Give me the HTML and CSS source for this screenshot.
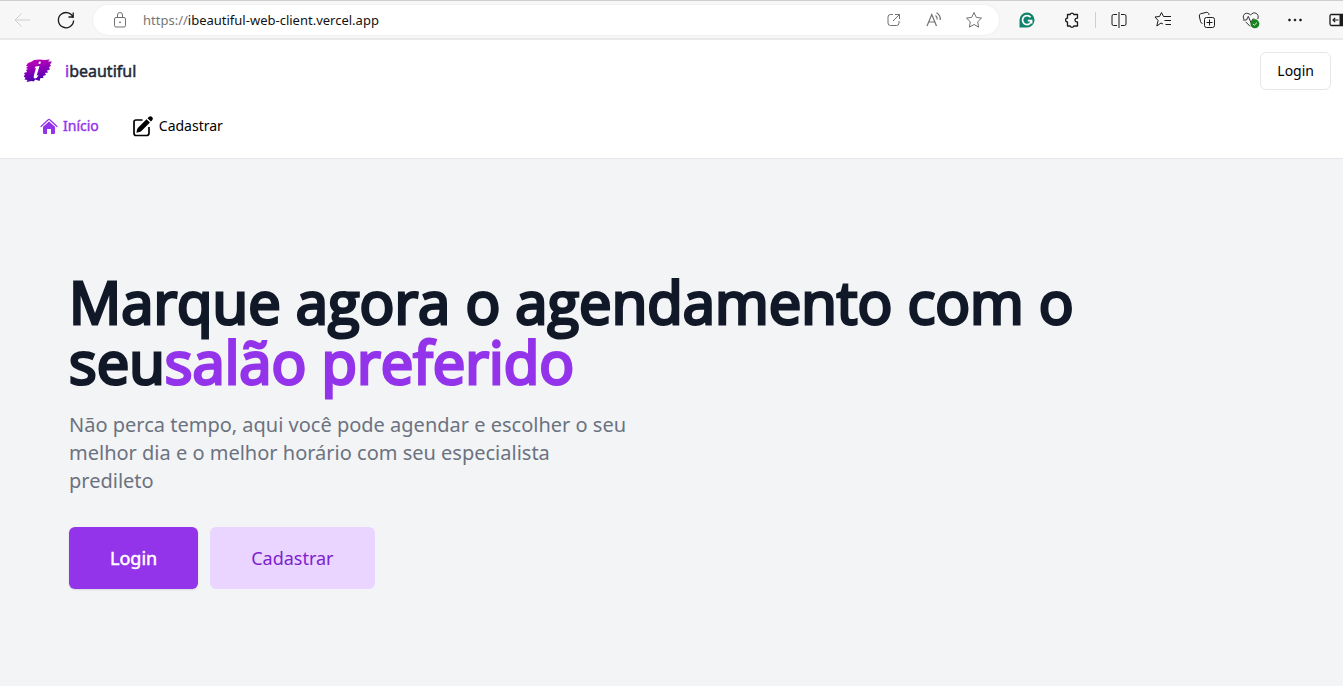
FILE: index.html
```html
<!DOCTYPE html>
<html lang="pt-BR">
<head>
<meta charset="utf-8">
<title>ibeautiful</title>
<link rel="stylesheet" href="styles.css">
</head>
<body>
<div class="browser">
  <button class="tool back" aria-label="Voltar"><svg width="18" height="18" viewBox="0 0 18 18"><path d="M17 9H2M8.500 2.500L2 9l6.500 6.500"/></svg></button>
  <button class="tool reload" aria-label="Atualizar"><svg width="18" height="18" viewBox="0 0 18 18"><path d="M16.300 7A7.600 7.600 0 1 0 16.600 9.500M16.200 1.500V6h-4.700" stroke-width="1.300"/></svg></button>
  <div class="address">
    <svg class="grey" width="16" height="18" viewBox="0 0 16 18"><rect x="2.500" y="6.500" width="11" height="9.500" rx="1.500"/><path d="M5.500 6.500V4a2.500 2.500 0 0 1 5 0v2.500"/><circle cx="8" cy="11.300" r=".5" fill="currentColor"/></svg>
    <div class="url"><span>https://</span>ibeautiful-web-client.vercel.app</div>
    <div class="address-tools grey">
      <button class="tool" aria-label="Abrir em janela"><svg width="16" height="16" viewBox="0 0 16 16"><path d="M8 2.500H5.500a2.500 2.500 0 0 0-2.500 2.500v6A2.500 2.500 0 0 0 5.500 13.500h6a2.500 2.500 0 0 0 2.500-2.500V9M10 2.500h4.500V7M14.200 2.800L8 9"/></svg></button>
      <button class="tool" aria-label="Ler em voz alta"><svg width="18" height="18" viewBox="0 0 18 18"><path d="M3 15L7.800 3.500 12.500 15M4.700 11h6.200M11.500 4.500q2 1.500 1.700 4M12.500 1.800q4.200 2.200 3.700 7.200" stroke-width="1.200"/></svg></button>
      <button class="tool" aria-label="Adicionar aos favoritos"><svg width="18" height="18" viewBox="0 0 18 18"><path d="M9 1.500l2.300 4.900 5.200.7-3.800 3.700.9 5.300L9 13.500l-4.600 2.600.9-5.300L1.500 7.100l5.200-.7z"/></svg></button>
    </div>
  </div>
  <div class="extensions">
    <button class="tool" aria-label="Grammarly"><svg width="16" height="16" viewBox="0 0 16 16"><path d="M.5 15.500V8a7.500 7.500 0 1 1 7.500 7.500z" fill="#11826b" stroke="none"/><path d="M11.600 5.300A4.500 4.500 0 1 0 12.500 8.700H8.800M12.600 8.500v3" stroke="#fff" stroke-width="1.700"/></svg></button>
    <button class="tool" aria-label="Extensões"><svg width="18" height="18" viewBox="0 0 18 18"><path d="M4.500 3.500h2.700a1.900 1.900 0 0 1 3.600 0H14.500V7.200q-2.500 0-2.500 1.900t2.500 1.900V15h-3.700a1.900 1.900 0 0 1-3.600 0H4.500v-4a1.900 1.900 0 0 1 0-3.800z" stroke-width="1.300" stroke-linejoin="round"/></svg></button>
  </div>
  <div class="window-tools">
    <button class="tool" aria-label="Tela dividida"><svg width="18" height="18" viewBox="0 0 18 18"><path d="M7 3.500H3.500a1.500 1.500 0 0 0-1.500 1.500v8a1.500 1.500 0 0 0 1.500 1.500H7M11 3.500h3.500A1.500 1.500 0 0 1 16 5v8a1.500 1.500 0 0 1-1.500 1.500H11M9 1v16"/></svg></button>
    <button class="tool" aria-label="Favoritos"><svg width="18" height="18" viewBox="0 0 18 18"><path d="M9 13L7 12l-4.200 3 1.300-5.500L1 6l4.500-.5L7.500 1.500l2 4H17M10.500 9.500H17M11.500 13.500H17"/></svg></button>
    <button class="tool" aria-label="Coleções"><svg width="18" height="18" viewBox="0 0 18 18"><rect x="6.500" y="6.500" width="10" height="10" rx="2"/><path d="M11.500 8.500v6M8.500 11.500h6M4.500 12.500q-1.500-.2-2-2L1.300 5q-.2-1.700 1.300-2.200l5.800-1.500q1.700-.2 2.300 1.300l.4 1.400"/></svg></button>
    <button class="tool" aria-label="Desempenho"><svg width="18" height="18" viewBox="0 0 20 20"><path d="M2 9C-.5 3 6 .5 9.500 4.500 13-.5 20 3 17.500 9M1 10h4l2-4 3 7 2-4h2M4 12l5 5"/><circle cx="14.300" cy="14.300" r="5" fill="#16831b" stroke="none"/><path d="M12 14.300l1.600 1.600 3-3" stroke="#fff"/></svg></button>
    <button class="tool" aria-label="Mais"><svg width="18" height="18" viewBox="0 0 18 18" class="solid"><circle cx="3.500" cy="9" r=".9"/><circle cx="9" cy="9" r=".9"/><circle cx="14.500" cy="9" r=".9"/></svg></button>
    <button class="tool" aria-label="Barra lateral"><svg width="18" height="18" viewBox="0 0 18 18"><path d="M16 3.500H1.500q-1.500 0-1.500 1.500v8q0 1.500 1.500 1.500H16z" stroke-width="1.300"/><path d="M10 4h6v10h-6z" fill="currentColor"/><path d="M8.500 9H3M5.200 6.800L3 9l2.200 2.200" stroke-width="1.200"/></svg></button>
  </div>
</div>

<header class="header">
  <div class="top">
    <a class="brand" href="#">
      <svg width="30" height="26" viewBox="0 0 30 26">
        <defs><linearGradient id="paint" x1="0" y1="0" x2=".3" y2="1"><stop offset="0" stop-color="#d000b4"/><stop offset=".5" stop-color="#9000b8"/><stop offset="1" stop-color="#4d00b0"/></linearGradient></defs>
        <path d="M4 5l4-1.500 2-1.500 6-.5 4 .5 6-.5-2 2 4 0-2 3 1 1-2 2 1 2-3 1 1 2-3 .5 1 2-3 1 .5 2-3 0-1 3-4-1.500-2 2-2-.5-5 1 1-2-3-.5 1-2-2.500-1 2-1.500-1-2 3-1-1-2 2-1-2-1 2-2-2 0z" fill="url(#paint)"/>
        <path d="M15 3.500l2 .3-.8 2.200-1.900-.2zM11.500 8.500l4-.5-2.800 9.500 1.800-.5q-1.500 3.500-3.500 3.500t-1-3.500l2-7-1.500.4z" fill="#fff"/>
      </svg>
      <span class="name"><span class="accent">i</span>beautiful</span>
    </a>
    <button class="login">Login</button>
  </div>
  <nav class="nav">
    <a class="link active" href="#"><svg width="18" height="18" viewBox="0 0 18 18"><path d="M9 4.500l6 5.200V16q0 1-1 1h-3v-5H7v5H4q-1 0-1-1V9.700z" fill="currentColor"/><path d="M1 9.500L8.200 2.700q.8-.8 1.600 0L17 9.500" fill="none" stroke="currentColor" stroke-width="1.200" stroke-linecap="round"/></svg>Início</a>
    <a class="link" href="#"><svg width="22" height="22" viewBox="0 0 22 22"><path d="M10.500 5H4Q2 5 2 7v11q0 2.500 2 2.500h10.500q2.500 0 2.500-2.500v-6" fill="none" stroke="currentColor" stroke-width="1.700"/><path d="M14.500 4.200l3.400 3.400-8.700 8.700q-1 .8-4.800 1.500.5-4 1.400-4.900zM15.500 3.200l1.300-1.300q1.600-1.500 3.300.1t.1 3.300l-1.300 1.300z" fill="currentColor"/></svg>Cadastrar</a>
  </nav>
</header>

<main class="hero">
  <h1 class="title">Marque agora o agendamento com o seu<span class="accent">salão preferido</span></h1>
  <p class="lead">Não perca tempo, aqui você pode agendar e escolher o seu melhor dia e o melhor horário com seu especialista predileto</p>
  <div class="actions">
    <button class="action primary">Login</button>
    <button class="action secondary">Cadastrar</button>
  </div>
</main>
</body>
</html>
```
FILE: styles.css
```css
* { box-sizing: border-box; }
body {
  margin: 0;
  min-height: 100vh;
  display: flex;
  flex-direction: column;
  overflow-x: hidden;
  background: #f3f4f6;
  color: #000;
  font: 14px/20px "Noto Sans", "Open Sans", sans-serif;
}
button { font: inherit; color: inherit; border: 0; background: none; padding: 0; cursor: pointer; }
a { color: inherit; text-decoration: none; }
svg { display: block; flex: none; }
.accent { color: #9333ea; }

.browser {
  display: flex;
  align-items: center;
  height: 40px;
  padding-left: 13px;
  overflow: hidden;
  background: #f7f7f7;
  border-top: 1px solid #cfcfcf;
  border-bottom: 2px solid #e9e9e9;
  color: #1b1b1b;
}
.tool { flex: none; }
.browser svg { fill: none; stroke: currentColor; stroke-width: 1px; overflow: visible; }
.browser .solid { fill: currentColor; }
.back { color: #cfcfcf; }
.reload { margin-left: 26px; }
.address {
  flex: 1;
  display: flex;
  align-items: center;
  height: 30px;
  margin-left: 18px;
  padding: 0 16px 0 19px;
  border-radius: 15px;
  background: #fff;
  box-shadow: 0 0 2px #e2e2e2;
}
.grey { color: #717171; }
.url { flex: 1; margin-left: 15px; font-size: 13px; color: #111; }
.url span { color: #767676; }
.address-tools { display: flex; align-items: center; gap: 23px; }
.extensions { display: flex; align-items: center; gap: 28px; padding: 0 14px 0 20px; }
.window-tools { display: flex; align-items: center; gap: 26px; width: 248px; padding-left: 15px; background: linear-gradient(#d0d0d0, #d0d0d0) left / 1px 16px no-repeat; }

.header { background: #fff; border-bottom: 1px solid #e5e7eb; }
.top { display: flex; justify-content: space-between; align-items: center; padding: 12px 12px 0 24px; }
.brand { display: flex; align-items: center; gap: 11px; }
.name { font-size: 16px; line-height: 24px; color: #1f2937; -webkit-text-stroke: 0.5px; }
.login { height: 38px; padding: 0 16px; border: 1px solid #e5e7eb; border-radius: 6px; background: #fff; }
.nav { display: flex; gap: 33px; padding: 24px 40px 20px; }
.link { display: flex; align-items: center; gap: 5px; height: 24px; }
.active { color: #9333ea; -webkit-text-stroke: 0.4px; }

.hero { flex: 1; padding: 113px 69px 97px; }
.title {
  max-width: 1024px;
  margin: 0;
  color: #111827;
  font-family: "Open Sans", sans-serif;
  font-size: 58px;
  line-height: 60px;
  font-weight: 400;
  -webkit-text-stroke: 3px;
}
.lead { max-width: 568px; margin: 19px 0 32px; color: #6b7280; font-size: 20px; line-height: 28px; }
.actions { display: flex; gap: 12px; }
.action { height: 62px; padding: 0 41px; border-radius: 6px; font-size: 18px; line-height: 28px; }
.primary { color: #fff; background: #9333ea; box-shadow: 0 1px 2px #0000001f; -webkit-text-stroke: 0.5px; }
.secondary { color: #7e22ce; background: #e9d5ff; }
```
